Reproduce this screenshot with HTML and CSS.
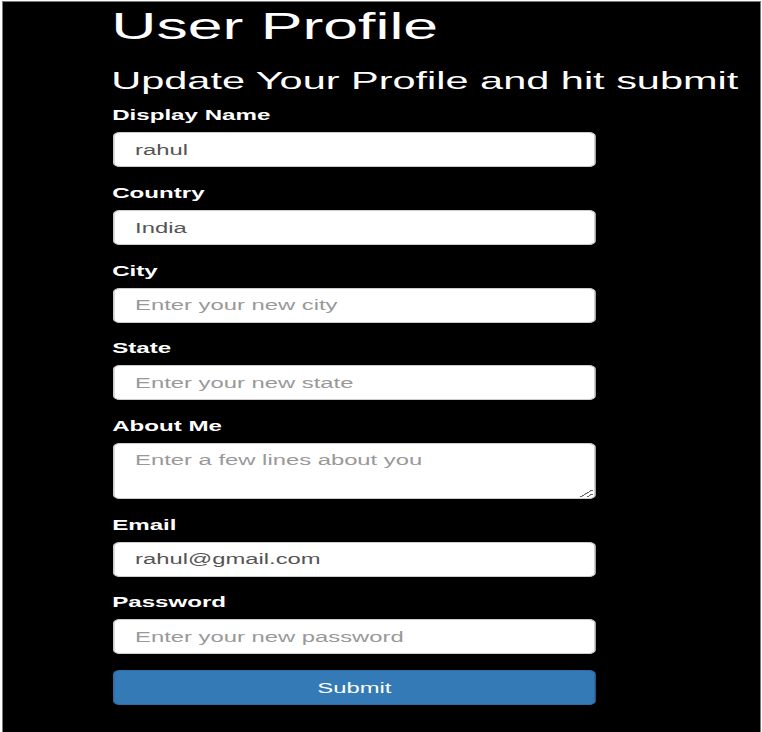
FILE: index.html
```html
<!DOCTYPE html>
<html>
<head>
<meta charset="utf-8">
<title>User Profile</title>
<link rel="stylesheet" href="styles.css">
</head>
<body>
<div class="frame">
  <div class="content">
    <h1 class="title">User Profile</h1>
    <h3 class="subtitle">Update Your Profile and hit submit</h3>
    <form class="form">
      <div class="group">
        <label class="label">Display Name</label>
        <input class="control" type="text" value="rahul">
      </div>
      <div class="group">
        <label class="label">Country</label>
        <input class="control" type="text" value="India">
      </div>
      <div class="group">
        <label class="label">City</label>
        <input class="control" type="text" placeholder="Enter your new city">
      </div>
      <div class="group">
        <label class="label">State</label>
        <input class="control" type="text" placeholder="Enter your new state">
      </div>
      <div class="group">
        <label class="label">About Me</label>
        <textarea class="control area" placeholder="Enter a few lines about you"></textarea>
      </div>
      <div class="group">
        <label class="label">Email</label>
        <input class="control" type="email" value="rahul@gmail.com">
      </div>
      <div class="group">
        <label class="label">Password</label>
        <input class="control" type="password" placeholder="Enter your new password">
      </div>
      <button class="btn" type="button">Submit</button>
    </form>
  </div>
</div>
</body>
</html>
```
FILE: styles.css
```css
html, body {
  margin: 0;
  padding: 0;
  background: #ffffff;
  overflow: hidden;
}

.frame {
  box-sizing: border-box;
  margin: 1px 0 0 2px;
  width: 759px;
  min-height: 731px;
  background: #000000;
  border: 1px solid #7a7a7a;
  border-bottom: none;
  padding: 0 0 0 110px;
  overflow: hidden;
}

.content {
  width: 284px;
  transform: scaleX(1.7);
  transform-origin: 0 0;
  font-family: "Liberation Sans", Arial, Helvetica, sans-serif;
  color: #ffffff;
}

.title {
  margin: 5px 0 0 -1px;
  font-size: 36.8px;
  font-weight: 400;
  line-height: 1.1;
  white-space: nowrap;
}

.subtitle {
  margin: 21px 0 10px -1px;
  font-size: 24.4px;
  font-weight: 400;
  line-height: 1.1;
  white-space: nowrap;
}

.form {
  margin: 0;
}

.group {
  display: flex;
  flex-direction: column;
  margin-bottom: 15.7px;
}

.label {
  display: block;
  margin: 0 0 7px -0.5px;
  font-size: 14.2px;
  font-weight: 700;
  line-height: 20px;
  white-space: nowrap;
}

.control {
  box-sizing: border-box;
  display: block;
  width: 100%;
  height: 35px;
  margin: 0;
  padding: 6px 12px;
  font-family: "Liberation Sans", Arial, Helvetica, sans-serif;
  font-size: 14px;
  line-height: 20px;
  color: #555555;
  background: #ffffff;
  border: 1px solid #cccccc;
  border-radius: 4px;
  outline: none;
}

.control::placeholder {
  color: #999999;
  opacity: 1;
}

.area {
  height: 56px;
  resize: vertical;
}

.btn {
  box-sizing: border-box;
  display: block;
  width: 100%;
  height: 35px;
  margin: 0;
  padding: 6px 12px;
  font-family: "Liberation Sans", Arial, Helvetica, sans-serif;
  font-size: 14px;
  line-height: 20px;
  color: #ffffff;
  background: #337ab7;
  border: 1px solid #2e6da4;
  border-radius: 4px;
}
```
